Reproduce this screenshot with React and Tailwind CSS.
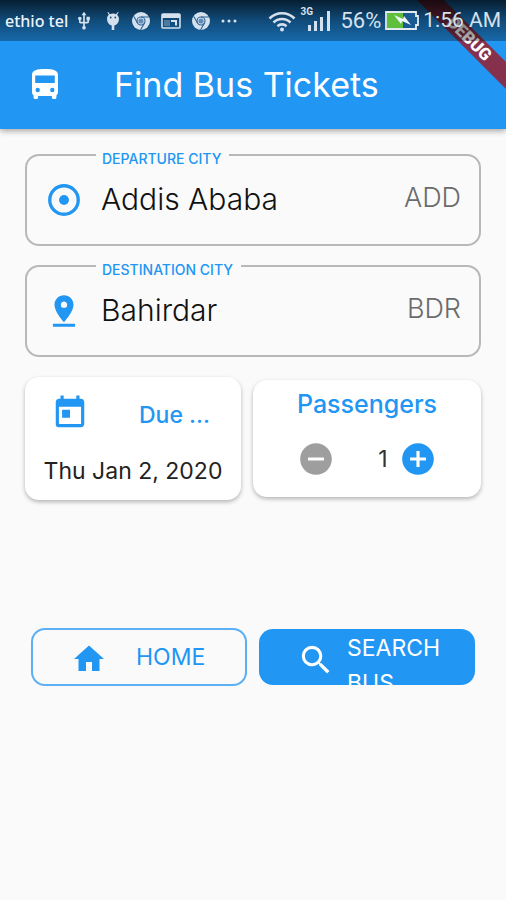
import React, { useState } from "react";
import {
  MdAddCircle,
  MdHome,
  MdPinDrop,
  MdRemoveCircle,
  MdSearch,
  MdToday,
  MdUsb,
} from "react-icons/md";

function DebugHead() {
  return (
    <svg className="h-5 w-4 shrink-0" viewBox="0 0 16 20" fill="currentColor">
      <path d="M3.2 1 5 3.2A6 6 0 0 1 8 2.500a6 6 0 0 1 3 .7L12.800 1l.8.6-1.500 2.200A5.500 5.500 0 0 1 14 8c0 3.300-2 5.800-4.700 6.600V19H6.700v-4.400C4 13.800 2 11.300 2 8c0-1.700.7-3.200 1.900-4.200L2.400 1.600z" />
      <circle cx="5.700" cy="6.500" r="0.900" fill="#164f82" />
      <circle cx="10.300" cy="6.500" r="0.900" fill="#164f82" />
    </svg>
  );
}

function ChromeIcon() {
  return (
    <svg className="size-[18px] shrink-0" viewBox="0 0 18 18">
      <circle cx="9" cy="9" r="9" fill="currentColor" />
      <g fill="none" stroke="#2a6296" strokeWidth="1.100">
        <circle cx="9" cy="9" r="4" />
        <path d="M9 5h8M5.500 11 1.800 4.500M12.500 11l-4 7" />
      </g>
      <circle cx="9" cy="9" r="2.600" fill="#5f8db8" />
    </svg>
  );
}

function NewsIcon() {
  return (
    <svg className="h-4 w-5 shrink-0" viewBox="0 0 20 16">
      <rect x="1" y="1" width="18" height="14" rx="1" fill="none" stroke="currentColor" strokeWidth="1.600" />
      <path d="M1 1h18v4H1z" fill="currentColor" />
      <path d="M3 7h6v6H3z" fill="currentColor" opacity="0.300" />
      <path d="M10 7h6v5.500h-2V9h-4z" fill="currentColor" />
    </svg>
  );
}

function WifiIcon() {
  return (
    <svg className="h-[22px] w-7 shrink-0" viewBox="0 0 28 22" fill="none" stroke="currentColor" strokeWidth="2.600">
      <path d="M1.500 8.500a17.500 17.500 0 0 1 25 0M5.500 12.500a12 12 0 0 1 17 0M9.500 16.200a6.500 6.500 0 0 1 9 0" />
      <circle cx="14" cy="19.500" r="2" fill="currentColor" stroke="none" />
    </svg>
  );
}

function Signal() {
  return (
    <svg className="h-5 w-6 shrink-0" viewBox="0 0 24 20" fill="currentColor">
      <rect x="0" y="14" width="3" height="6" />
      <rect x="6" y="10" width="3" height="10" />
      <rect x="12" y="6" width="3" height="14" />
      <rect x="19" y="0" width="3" height="20" />
    </svg>
  );
}

function Battery() {
  return (
    <svg className="h-[19px] w-[34px] shrink-0" viewBox="0 0 34 19">
      <path d="M1 1h30v4h2v9h-2v4H1z" fill="#1c5a92" stroke="#e3eaf1" strokeWidth="1.800" />
      <rect x="2" y="2" width="16" height="15" fill="#5fbf3a" />
      <path d="m9 4 9 4 1-3 7 9-9-4-1 3z" fill="#f1f6fa" />
    </svg>
  );
}

function BusIcon() {
  return (
    <svg className="h-[30px] w-[26px] shrink-0" viewBox="0 0 26 30" fill="#ffffff">
      <path
        fillRule="evenodd"
        d="M0 6C0 1 5 0 13 0s13 1 13 6v17c0 1.500-.6 2.600-1.600 3.400V28.500c0 .9-.6 1.500-1.500 1.500h-1.500c-.9 0-1.500-.6-1.500-1.500V27H6.100v1.500c0 .9-.6 1.500-1.500 1.500H3.100c-.9 0-1.500-.6-1.500-1.500v-2.100C.6 25.600 0 24.500 0 23zM3.200 6.500V14h19.600V6.500zM5.700 18.800a2.200 2.200 0 1 0 0 4.400 2.200 2.200 0 0 0 0-4.400m14.600 0a2.200 2.200 0 1 0 0 4.400 2.200 2.200 0 0 0 0-4.400"
      />
    </svg>
  );
}

function OriginIcon({ className }) {
  return (
    <svg className={className} width="1em" height="1em" viewBox="0 0 24 24">
      <circle cx="12" cy="12" r="9" fill="none" stroke="currentColor" strokeWidth="2.100" />
      <circle cx="12" cy="12" r="3.100" fill="currentColor" />
    </svg>
  );
}

function StatusBar() {
  return (
    <div className="relative z-10 flex h-[41px] items-center bg-linear-to-b from-black/80 via-black/50 to-black/30 px-[5px] font-['Roboto',sans-serif] text-[#d5e1ec]">
      <span className="font-['Noto_Sans',sans-serif] text-base font-medium text-[#eef3f8]">
        ethio tel
      </span>
      <div className="ml-[6px] flex items-center gap-[11px]">
        <MdUsb className="text-xl" />
        <DebugHead />
        <ChromeIcon />
        <NewsIcon />
        <ChromeIcon />
        <svg className="h-1 w-4" viewBox="0 0 16 4" fill="currentColor">
          <circle cx="2" cy="2" r="1.500" />
          <circle cx="8" cy="2" r="1.500" />
          <circle cx="14" cy="2" r="1.500" />
        </svg>
      </div>
      <div className="ml-auto flex items-center">
        <WifiIcon />
        <div className="relative ml-3">
          <Signal />
          <span className="absolute -top-1 -left-2 text-[10px] leading-[10px] font-bold">3G</span>
        </div>
        <span className="ml-2 text-[22px]">56%</span>
        <div className="ml-1">
          <Battery />
        </div>
        <span className="ml-1 text-[21px] whitespace-nowrap">1:56 AM</span>
      </div>
    </div>
  );
}

function CityField({ id, label, city, code, icon: Icon }) {
  return (
    <fieldset className="min-w-0 rounded-[14px] border-2 border-[#b8b8b8] px-[18px]">
      <legend className="ml-[51px] pt-2 pr-2 pl-[6px] text-sm leading-4 font-medium text-[#2196f3]">
        <label htmlFor={id}>{label}</label>
      </legend>
      <div className="flex h-[77px] items-center pb-3">
        <Icon className="shrink-0 text-[38px] text-[#2196f3]" />
        <input
          id={id}
          defaultValue={city}
          className="ml-[18px] w-full min-w-0 flex-1 bg-transparent pb-[2px] text-3xl font-light text-[#111111] outline-none"
        />
        <span className="pb-[2px] text-[27px] font-light text-[#6b6b6b]">{code}</span>
      </div>
    </fieldset>
  );
}

function App() {
  const [passengers, setPassengers] = useState(1);

  return (
    <div className="min-h-screen bg-[#fafafa] font-['Inter',sans-serif]">
      <header className="relative overflow-hidden bg-[#2196f3] shadow-[0_2px_6px_rgba(0,0,0,0.35)]">
        <div className="absolute top-[28px] -right-[62px] w-[200px] rotate-45 bg-[#85304c] pl-1 text-center font-['Roboto',sans-serif] text-[17px] leading-[19px] font-black text-white">
          DEBUG
        </div>
        <StatusBar />
        <div className="flex h-[88px] items-center px-8 pb-[2px]">
          <BusIcon />
          <h1 className="ml-14 text-[34px] font-normal whitespace-nowrap text-white">
            Find Bus Tickets
          </h1>
        </div>
      </header>

      <main className="px-[25px] pt-[14px]">
        <div className="flex flex-col gap-2">
          <CityField id="departure" label="DEPARTURE CITY" city="Addis Ababa" code="ADD" icon={OriginIcon} />
          <CityField id="destination" label="DESTINATION CITY" city="Bahirdar" code="BDR" icon={MdPinDrop} />
        </div>

        <div className="mt-5 flex items-center gap-3">
          <section className="h-[123px] min-w-0 flex-[18] rounded-[14px] bg-white shadow-[0_2px_4px_rgba(0,0,0,0.28)]">
            <div className="flex items-center pt-[17px] pl-[26px]">
              <MdToday className="shrink-0 text-[38px] text-[#2196f3]" />
              <p className="ml-[50px] pt-1 text-[23px] leading-[34px] font-medium text-[#2196f3]">Due ...</p>
            </div>
            <p className="mt-5 text-center text-[23px] leading-[38px] whitespace-nowrap text-[#222222]">
              Thu Jan 2, 2020
            </p>
          </section>
          <section className="h-[117px] min-w-0 flex-[19] rounded-[14px] bg-white pt-2 shadow-[0_2px_4px_rgba(0,0,0,0.28)]">
            <h2 className="text-center text-[25px] leading-8 font-medium text-[#2196f3]">Passengers</h2>
            <div className="mt-5 flex items-center justify-center">
              <button
                aria-label="Remove passenger"
                onClick={() => setPassengers(Math.max(1, passengers - 1))}
              >
                <MdRemoveCircle className="text-[38px] text-[#9e9e9e]" />
              </button>
              <span className="ml-10 w-4 text-center text-[23px] text-[#333333]">{passengers}</span>
              <button
                className="ml-2"
                aria-label="Add passenger"
                onClick={() => setPassengers(passengers + 1)}
              >
                <MdAddCircle className="text-[38px] text-[#2196f3]" />
              </button>
            </div>
          </section>
        </div>

        <div className="mt-32 grid grid-cols-2 items-center gap-3 px-[6px]">
          <button className="flex h-[58px] min-w-0 items-center rounded-[14px] border-2 border-[#5aaff5] pl-[38px] text-[23px] text-[#2196f3]">
            <MdHome className="mt-1 shrink-0 text-[36px]" />
            <span className="ml-[29px]">HOME</span>
          </button>
          <button className="flex h-[56px] min-w-0 items-start overflow-hidden rounded-[14px] bg-[#2196f3] pl-[38px] text-left text-[23px] leading-[35px] text-white">
            <MdSearch className="mt-3 shrink-0 text-[38px]" />
            <span className="mt-[2px] ml-3 w-24">SEARCH BUS</span>
          </button>
        </div>
      </main>
    </div>
  );
}

export default App;
